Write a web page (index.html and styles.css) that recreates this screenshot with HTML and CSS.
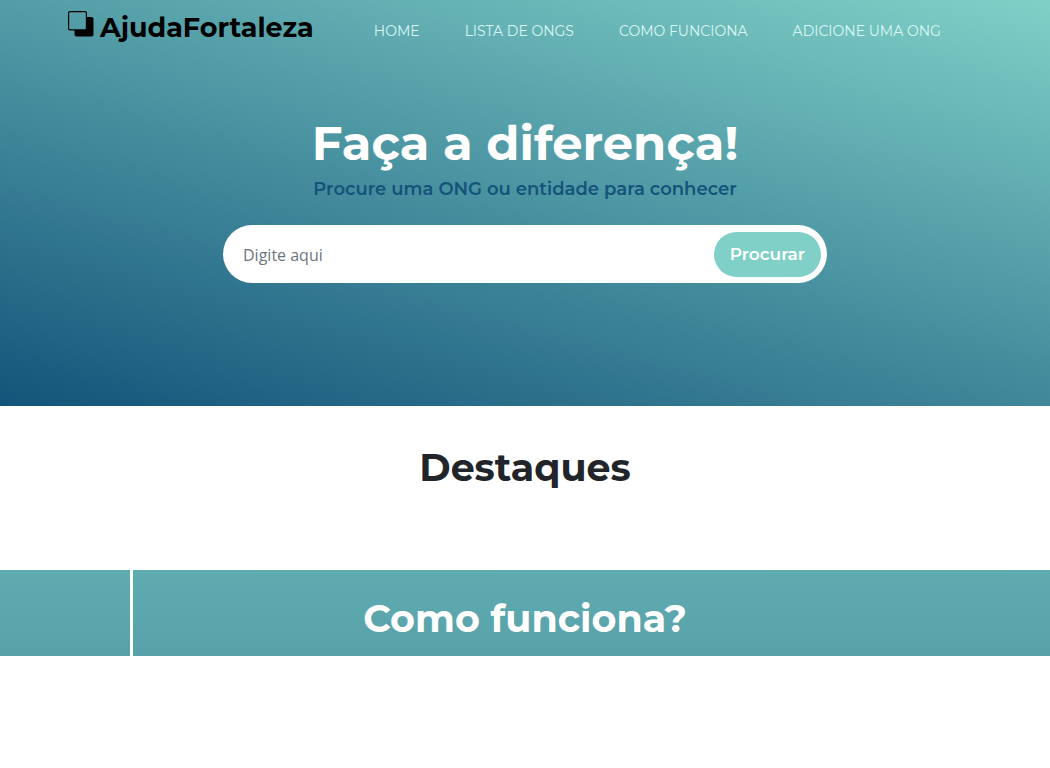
FILE: index.html
```html
<!DOCTYPE html>
<html lang="pt-BR">
<head>
<meta charset="utf-8">
<meta name="viewport" content="width=device-width, initial-scale=1">
<title>AjudaFortaleza</title>
<link rel="stylesheet" href="styles.css">
</head>
<body>
<div class="hero">
  <header class="navbar">
    <a class="brand" href="#">
      <svg class="brand-icon" viewBox="0 0 26 26" aria-hidden="true">
        <path fill="#000" fill-rule="evenodd" d="M2 0h15a2 2 0 0 1 2 2v4h4.500a2 2 0 0 1 2 2v15.500a2 2 0 0 1-2 2h-15a2 2 0 0 1-2-2V19.500H2a2 2 0 0 1-2-2V2a2 2 0 0 1 2-2zm0 1.200a.8.8 0 0 0-.8.8v15.500a.8.8 0 0 0 .8.8h15a.8.8 0 0 0 .8-.8V2a.8.8 0 0 0-.8-.8z"/>
      </svg>
      <span>AjudaFortaleza</span>
    </a>
    <nav class="menu">
      <a href="#">HOME</a>
      <a href="#destaques">LISTA DE ONGS</a>
      <a href="#como-funciona">COMO FUNCIONA</a>
      <a href="#">ADICIONE UMA ONG</a>
    </nav>
  </header>
  <main class="intro">
    <h1 class="title">Faça a diferença!</h1>
    <h2 class="subtitle">Procure uma ONG ou entidade para conhecer</h2>
    <form class="search">
      <input class="search-input" type="search" placeholder="Digite aqui" aria-label="Procurar ONG">
      <button class="search-button" type="submit">Procurar</button>
    </form>
  </main>
</div>
<section class="highlights" id="destaques">
  <h2 class="section-title">Destaques</h2>
</section>
<section class="how" id="como-funciona">
  <h2 class="section-title">Como funciona?</h2>
</section>
</body>
</html>
```
FILE: styles.css
```css
* { box-sizing: border-box; }
body {
  margin: 0;
  background: #fff;
  color: #212529;
  font-family: Montserrat, Inter, sans-serif;
}
h1, h2 { margin: 0; }
.hero {
  background: linear-gradient(15deg, #13547a 0%, #80d0c7 100%);
  padding-bottom: 123px;
}
.navbar {
  display: flex;
  align-items: center;
  gap: 60px;
  padding: 8px 68px;
}
.brand {
  display: flex;
  align-items: center;
  gap: 6px;
  color: #000;
  font-size: 27px;
  line-height: 40px;
  font-weight: 700;
  text-decoration: none;
}
.brand-icon { width: 26px; height: 26px; margin-bottom: 8px; }
.menu {
  display: flex;
  gap: 45px;
  padding-top: 5px;
}
.menu a {
  color: #d9f6f4;
  font-size: 14px;
  line-height: 20px;
  text-decoration: none;
  white-space: nowrap;
}
.intro {
  display: flex;
  flex-direction: column;
  align-items: center;
  padding: 57px 24px 0;
  text-align: center;
}
.title {
  color: #fff;
  font-size: 48px;
  line-height: 60px;
}
.subtitle {
  color: #13547a;
  font-size: 18px;
  line-height: 24px;
  font-weight: 600;
  padding-top: 4px;
}
.search {
  display: flex;
  width: 100%;
  max-width: 604px;
  margin-top: 24px;
  padding: 7px 6px 6px 20px;
  border-radius: 50px;
  background: #fff;
}
.search-input {
  flex: 1;
  min-width: 0;
  padding: 0;
  border: 0;
  outline: 0;
  background: transparent;
  font: 16px/24px "Open Sans", sans-serif;
}
.search-input::placeholder { color: #6c757d; opacity: 1; }
.search-button {
  padding: 10px 16px;
  border: 0;
  border-radius: 50px;
  background: #80d0c7;
  color: #fff;
  font: 600 17px/25px Montserrat, Inter, sans-serif;
}
.section-title {
  font-size: 38px;
  line-height: 48px;
  text-align: center;
}
.highlights { padding: 38px 24px 78px; }
.how {
  position: relative;
  padding: 25px 24px 13px;
  background: linear-gradient(180deg, #5fabb0, #59a1aa);
  color: #fff;
}
.how::before {
  content: "";
  position: absolute;
  top: 0;
  bottom: 0;
  left: 130px;
  width: 3px;
  background: #fff;
}
```
